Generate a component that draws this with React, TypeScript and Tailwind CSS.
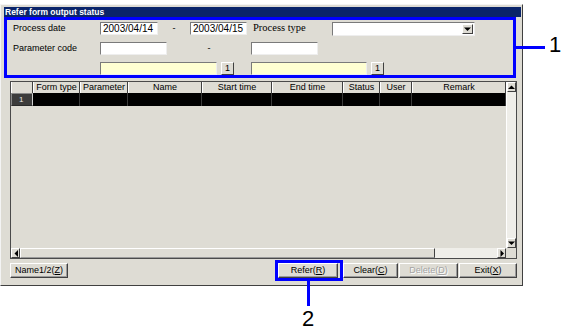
import React from "react";

const Tri = ({ dir }: { dir: "up" | "down" | "left" | "right" }) => {
  const pts = {
    up: "0,4 7,4 3.5,0.5",
    down: "0,0.5 7,0.5 3.5,4",
    left: "4,0 4,7 0.5,3.5",
    right: "0.5,0 0.5,7 4,3.5",
  }[dir];
  const horiz = dir === "up" || dir === "down";
  return (
    <svg width={horiz ? 7 : 4} height={horiz ? 4 : 7} viewBox={horiz ? "0 0 7 4" : "0 0 4 7"}>
      <polygon points={pts} fill="#000" />
    </svg>
  );
};

const ArrowBox = ({ dir, className }: { dir: "up" | "down" | "left" | "right"; className: string }) => (
  <div className={`flex items-center justify-center bg-[#dedcd4] border border-t-white border-l-white border-r-[#404040] border-b-[#404040] ${className}`}>
    <Tri dir={dir} />
  </div>
);

const Field = ({ className, children }: { className: string; children?: React.ReactNode }) => (
  <div className={`h-[13px] border border-t-[#7a7a7a] border-l-[#7a7a7a] border-b-[#eeeeee] border-r-[#eeeeee] text-[10px] leading-[11px] pl-[2px] overflow-hidden whitespace-nowrap ${className}`}>
    {children}
  </div>
);

const SmallBtn = () => (
  <div className="w-[13px] h-[13px] flex items-center justify-center border border-t-white border-l-white border-r-[#404040] border-b-[#404040] text-[9px] leading-none">
    1
  </div>
);

const Btn = ({ w, children, disabled }: { w: string; children: React.ReactNode; disabled?: boolean }) => (
  <div
    className={`${w} h-[15px] flex items-center justify-center border border-t-white border-l-white border-r-[#404040] border-b-[#404040] shadow-[inset_-1px_-1px_0_#9a9a9a] text-[9px] leading-none ${
      disabled ? "text-[#a4a4a4] [text-shadow:1px_1px_0_#fff]" : "text-black"
    }`}
  >
    {children}
  </div>
);

const cols = [
  { label: "", w: "w-[22px]" },
  { label: "Form type", w: "w-[47px]" },
  { label: "Parameter", w: "w-[48px]" },
  { label: "Name", w: "w-[74px]" },
  { label: "Start time", w: "w-[70px]" },
  { label: "End time", w: "w-[71px]" },
  { label: "Status", w: "w-[37px]" },
  { label: "User", w: "w-[32px]" },
  { label: "Remark", w: "w-[94px]" },
];

export default function App() {
  return (
    <div className="relative w-[575px] h-[336px] bg-white overflow-hidden font-[family-name:'Liberation_Sans',Arial,sans-serif] text-black">
      <div className="mt-[4px] w-[523px] h-[282px] bg-[#dedcd4] border border-t-[#f4f4f4] border-l-[#f4f4f4] border-r-[#404040] border-b-[#404040] pl-[3px] pt-[2px] pr-[1px] flex flex-col">
        {/* title bar */}
        <div className="h-[10px] bg-[#0a246a] text-white font-bold text-[8.5px] leading-[10px] pl-[1px] whitespace-nowrap">
          Refer form output status
        </div>

        {/* search criteria */}
        <div className="w-[512px] h-[61px] border-[3px] border-[#0000ff] pl-[6px] pt-[2px] flex flex-col gap-[7px] text-[9px]">
          <div className="h-[13px] flex items-center">
            <div className="w-[87px] leading-none">Process date</div>
            <Field className="w-[58px] bg-white">2003/04/14</Field>
            <div className="w-[32px] text-center leading-none">-</div>
            <Field className="w-[57px] bg-white">2003/04/15</Field>
            <div className="ml-[6px] w-[79px] font-[family-name:'Liberation_Serif',serif] text-[10.5px] leading-none">Process type</div>
            <div className="w-[143px] h-[14px] bg-white border border-t-[#7a7a7a] border-l-[#7a7a7a] border-b-[#eeeeee] border-r-[#eeeeee] flex justify-end items-stretch p-[1px]">
              <ArrowBox dir="down" className="w-[11px]" />
            </div>
          </div>
          <div className="h-[13px] flex items-center">
            <div className="w-[87px] leading-none">Parameter code</div>
            <Field className="w-[67px] bg-white" />
            <div className="w-[84px] text-center leading-none">-</div>
            <Field className="w-[67px] bg-white" />
          </div>
          <div className="h-[13px] flex items-center">
            <div className="w-[87px]" />
            <Field className="w-[117px] bg-[#ffffd2]" />
            <div className="ml-[4px]">
              <SmallBtn />
            </div>
            <div className="w-[17px]" />
            <Field className="w-[116px] bg-[#ffffd2]" />
            <div className="ml-[4px]">
              <SmallBtn />
            </div>
          </div>
        </div>

        {/* result grid */}
        <div className="mt-[3px] ml-[6px] w-[507px] h-[178px] border border-[#4a4a4a] flex flex-col">
          <div className="flex flex-1">
            <div className="w-[495px] flex flex-col">
              <div className="h-[11px] flex">
                {cols.map((c, i) => (
                  <div
                    key={i}
                    className={`${c.w} h-[11px] border-l border-l-white border-r border-r-[#404040] text-[9px] leading-[11px] text-center whitespace-nowrap overflow-hidden`}
                  >
                    {c.label}
                  </div>
                ))}
              </div>
              <div className="h-[13px] flex bg-black">
                {cols.map((c, i) =>
                  i === 0 ? (
                    <div
                      key={i}
                      className={`${c.w} h-[13px] bg-[#3c3c3c] border border-t-[#8a8a8a] border-l-[#8a8a8a] border-r-[#d0d0d0] border-b-[#2a2a2a] text-[#e8e8e8] text-[8px] leading-[11px] pl-[7px]`}
                    >
                      1
                    </div>
                  ) : (
                    <div key={i} className={`${c.w} h-[13px] border-r border-r-[#3a3a3a]`} />
                  )
                )}
              </div>
              <div className="flex-1" />
            </div>
            <div className="w-[10px] flex flex-col bg-[#efeee9] border-l border-l-white">
              <ArrowBox dir="up" className="h-[10px]" />
              <div className="flex-1" />
              <ArrowBox dir="down" className="h-[10px]" />
            </div>
          </div>
          <div className="h-[10px] flex">
            <ArrowBox dir="left" className="w-[9px]" />
            <div className="w-[415px] border border-t-white border-l-white border-r-[#404040] border-b-[#9a9a9a]" />
            <div className="w-[62px] bg-[#efeee9]" />
            <ArrowBox dir="right" className="w-[9px]" />
            <div className="w-[10px]" />
          </div>
        </div>

        {/* buttons */}
        <div className="mt-[1px] ml-[6px] h-[21px] flex items-center">
          <Btn w="w-[58px]">
            Name1/2(<u>Z</u>)
          </Btn>
          <div className="ml-[207px] w-[68px] h-[21px] border-[3px] border-[#0000ff]">
            <Btn w="w-[60px]">
              Refer(<u>R</u>)
            </Btn>
          </div>
          <Btn w="w-[55px]">
            Clear(<u>C</u>)
          </Btn>
          <div className="ml-[1px]">
            <Btn w="w-[59px]" disabled>
              Delete(<u>D</u>)
            </Btn>
          </div>
          <div className="ml-[1px]">
            <Btn w="w-[58px]">
              Exit(<u>X</u>)
            </Btn>
          </div>
        </div>
      </div>

      {/* callouts */}
      <div className="absolute left-[516px] top-[46px] w-[29px] h-[3px] bg-[#0000ff]" />
      <div className="absolute left-[549px] top-[34px] text-[22px] leading-none">1</div>
      <div className="absolute left-[307px] top-[281px] w-[3px] h-[25px] bg-[#0000ff]" />
      <div className="absolute left-[302px] top-[308px] text-[22px] leading-none">2</div>
    </div>
  );
}
